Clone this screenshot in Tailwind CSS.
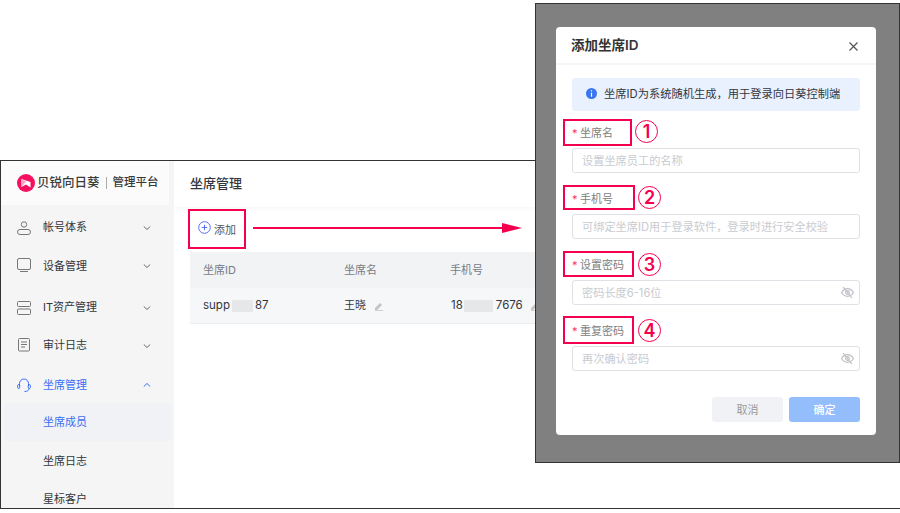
<!DOCTYPE html>
<html lang="zh">
<head>
<meta charset="UTF-8">
<script src="https://cdn.jsdelivr.net/npm/@tailwindcss/browser@4"></script>
<title>添加坐席ID</title>
</head>
<body class="bg-white">
<div class="relative w-[900px] h-[513px] overflow-hidden bg-white font-['Inter','Noto_Sans_CJK_SC',sans-serif] text-[11px] text-[#33363d]">

  <!-- app window -->
  <div class="absolute left-0 top-[160px] w-[902px] h-[349px] border border-[#333] flex">
    <aside class="w-[173px] shrink-0 h-full bg-[#f5f5f6] flex flex-col overflow-hidden">
      <div class="h-[44px] shrink-0 bg-white/60 flex items-center pl-[16px] mr-[5px] text-[#3a3a3a] font-medium">
        <svg class="w-[18px] h-[18px] mr-[2px] shrink-0" viewBox="0 0 18 18"><circle cx="9" cy="9" r="9" fill="#f5115f"/><path d="M4.500 5l9 3v5.500L9 10.500 4.500 13z" fill="#fff"/><path d="M9 7.500L4.500 5v8z" fill="#f9a3c0"/></svg>
        <span class="text-[12.5px]">贝锐向日葵</span><span class="w-px h-[12px] bg-[#aaa] mx-[6px]"></span><span class="text-[11.5px]">管理平台</span>
      </div>
      <nav class="flex flex-col shrink-0">
        <div class="h-[39px] mt-[3px] flex items-center pl-[16px] pr-[23px]">
          <svg class="w-[14px] h-[14px] mr-[12px]" viewBox="0 0 14 14" fill="none" stroke="#777" stroke-width="1"><circle cx="7" cy="3.500" r="2.700"/><rect x=".5" y="8.500" width="13" height="5" rx="2.500"/></svg>
          <span class="flex-1">帐号体系</span>
          <svg class="w-[8px] h-[6px]" viewBox="0 0 8 6" fill="none" stroke="#666"><path d="M.8 1.500L4 4.500l3.200-3"/></svg>
        </div>
        <div class="h-[38px] flex items-center pl-[16px] pr-[23px]">
          <svg class="w-[14px] h-[14px] mr-[12px] -translate-y-[1px]" viewBox="0 0 14 14" fill="none" stroke="#777" stroke-width="1"><rect x=".5" y=".5" width="13" height="11" rx="1.500"/><path d="M3 13.500h8"/></svg>
          <span class="flex-1">设备管理</span>
          <svg class="w-[8px] h-[6px]" viewBox="0 0 8 6" fill="none" stroke="#666"><path d="M.8 1.500L4 4.500l3.200-3"/></svg>
        </div>
        <div class="h-[45px] flex items-center pl-[16px] pr-[23px]">
          <svg class="w-[14px] h-[14px] mr-[12px]" viewBox="0 0 14 14" fill="none" stroke="#777" stroke-width="1"><rect x=".5" y=".5" width="13" height="5" rx="1"/><rect x=".5" y="8" width="13" height="5.500" rx="1"/></svg>
          <span class="flex-1">IT资产管理</span>
          <svg class="w-[8px] h-[6px]" viewBox="0 0 8 6" fill="none" stroke="#666"><path d="M.8 1.500L4 4.500l3.200-3"/></svg>
        </div>
        <div class="h-[31px] flex items-center pl-[17px] pr-[23px]">
          <svg class="w-[13px] h-[14px] mr-[12px] -translate-y-[1px]" viewBox="0 0 13 14" fill="none" stroke="#777" stroke-width="1"><rect x=".5" y=".5" width="11" height="12.500" rx="1"/><path d="M3 4h6M3 6.500h6M3 9h4"/></svg>
          <span class="flex-1">审计日志</span>
          <svg class="w-[8px] h-[6px]" viewBox="0 0 8 6" fill="none" stroke="#666"><path d="M.8 1.500L4 4.500l3.200-3"/></svg>
        </div>
        <div class="h-[42px] pt-[6px] flex items-center pl-[16px] pr-[23px] text-[#3a6ff5]">
          <svg class="w-[14px] h-[14px] mr-[12px]" viewBox="0 0 14 14" fill="none" stroke="#3a6ff5" stroke-width="1"><path d="M2.500 8V5.500a4.500 4.500 0 0 1 9 0V8"/><rect x=".7" y="6.500" width="2" height="4" rx="1"/><rect x="11.300" y="6.500" width="2" height="4" rx="1"/><path d="M12 10.500c0 2-2 3-4.500 3"/></svg>
          <span class="flex-1">坐席管理</span>
          <svg class="w-[8px] h-[6px]" viewBox="0 0 8 6" fill="none" stroke="#3a6ff5"><path d="M.8 4.500L4 1.500l3.200 3"/></svg>
        </div>
        <div class="h-[38px] mx-[3px] pl-[39px] flex items-center rounded-[4px] bg-[#f1f2f5] text-[#3a6ff5]">坐席成员</div>
        <div class="h-[40px] pl-[42px] flex items-center">坐席日志</div>
        <div class="h-[36px] pl-[42px] flex items-center">星标客户</div>
      </nav>
    </aside>
    <main class="flex-1 bg-white overflow-hidden">
      <div class="h-[46px] flex items-center pl-[16px] text-[13px] font-medium shadow-[0_2px_4px_rgba(0,0,0,0.03)]">坐席管理</div>
      <div class="h-[45px] pl-[24px] flex items-center text-[#555]">
        <svg class="w-[13px] h-[13px] mr-[3px] -translate-y-[2px]" viewBox="0 0 13 13" fill="none" stroke="#5a6ff0" stroke-width="1"><circle cx="6.500" cy="6.500" r="5.800"/><path d="M6.500 3.800v5.400M3.800 6.500h5.400"/></svg>
        <span class="pt-[1px]">添加</span>
      </div>
      <div class="ml-[16px] text-[11.5px] text-[#33363d]">
        <div class="h-[36px] flex items-center bg-[#f2f3f5] text-[#777c85] text-[11px]">
          <span class="w-[154px] pl-[13px]">坐席ID</span><span class="w-[106px]">坐席名</span><span>手机号</span>
        </div>
        <div class="h-[36px] flex items-center bg-[#f6f7f9] border-b border-[#eceef2]">
          <span class="w-[154px] pl-[13px] flex items-center">supp<span class="w-[21px] h-[12px] ml-[2px] mr-[2px] bg-[#e6e7e9]"></span>87</span>
          <span class="w-[106px] flex items-center text-[11px]">王晓
            <svg class="w-[10px] h-[10px] ml-[8px]" viewBox="0 0 10 10" fill="#c4c4c4"><path d="M1 7l5-5 2 2-5 5H1zM1 9.300h8v.7H1z"/></svg>
          </span>
          <span class="flex items-center pl-[1px]">18<span class="w-[29px] h-[12px] ml-[1px] mr-[3px] bg-[#e6e7e9]"></span>7676
            <svg class="w-[10px] h-[10px] ml-[7px]" viewBox="0 0 10 10" fill="#c4c4c4"><path d="M1 7l5-5 2 2-5 5H1zM1 9.300h8v.7H1z"/></svg>
          </span>
        </div>
      </div>
    </main>
  </div>

  <!-- highlight on the add button, and the arrow -->
  <div class="absolute left-[188px] top-[209px] w-[58px] h-[40px] border-[2px] border-[#f5004f]"></div>
  <svg class="absolute left-[252px] top-[220px] w-[272px] h-[16px]" viewBox="0 0 272 16"><path d="M1 8h250" stroke="#f5004f" stroke-width="2"/><path d="M250 3l20 5-20 5z" fill="#f5004f"/></svg>

  <!-- dialog screenshot -->
  <div class="absolute left-[535px] top-[3px] w-[365px] h-[460px] bg-[#808080] border border-[#333]">
    <div class="absolute left-[20px] top-[23px] w-[320px] h-[408px] bg-white rounded-[4px] flex flex-col">
      <div class="h-[38px] shrink-0 flex items-center justify-between pl-[15px] pr-[18px] border-b-2 border-[#f5f5f6]">
        <span class="text-[13.5px] font-semibold text-[#333]">添加坐席ID</span>
        <svg class="w-[9px] h-[9px] translate-y-[1px]" viewBox="0 0 9 9" stroke="#555" stroke-width="1.200"><path d="M.5.5l8 8M8.500.5l-8 8"/></svg>
      </div>
      <div class="mt-[13px] mx-[16px] h-[33px] rounded-[3px] bg-[#e8f1fd] flex items-center pl-[14px] text-[11.25px] shrink-0">
        <svg class="w-[11px] h-[11px] mr-[7px] -translate-y-[1px]" viewBox="0 0 11 11"><circle cx="5.500" cy="5.500" r="5.500" fill="#3a76f0"/><path d="M5.500 2.300v1.200M5.500 4.700v4" stroke="#fff" stroke-width="1.200"/></svg>
        坐席ID为系统随机生成，用于登录向日葵控制端
      </div>
      <form class="mx-[16px] flex flex-col text-[#808080]">
        <label class="h-[22px] mt-[10px] pt-[2px] flex items-center"><span class="text-[#f5356f] w-[8px]">*</span>坐席名</label>
        <div class="h-[25px] mt-[5px] pt-[2px] border border-[#dfe1e6] rounded-[3px] flex items-center px-[9px] text-[11.2px] text-[#c9cbd0]">设置坐席员工的名称</div>
        <label class="h-[22px] mt-[14px] pt-[2px] flex items-center"><span class="text-[#f5356f] w-[8px]">*</span>手机号</label>
        <div class="h-[25px] mt-[5px] pt-[2px] border border-[#dfe1e6] rounded-[3px] flex items-center px-[9px] text-[11.2px] text-[#c9cbd0]">可绑定坐席ID用于登录软件，登录时进行安全校验</div>
        <label class="h-[22px] mt-[14px] pt-[2px] flex items-center"><span class="text-[#f5356f] w-[8px]">*</span>设置密码</label>
        <div class="h-[25px] mt-[5px] border border-[#dfe1e6] rounded-[3px] flex items-center justify-between pl-[9px] pr-[5px] text-[11.2px] text-[#c9cbd0]"><span class="pt-[2px]">密码长度6-16位</span>
          <svg class="w-[13px] h-[13px]" viewBox="0 0 12 12" fill="none" stroke="#bfc1c6" stroke-width="1.100"><path d="M.5 6C2 3.500 4 2.500 6 2.500S10 3.500 11.500 6C10 8.500 8 9.500 6 9.500S2 8.500 .5 6z"/><circle cx="6" cy="6" r="1.700"/><path d="M2 1l8 10"/></svg>
        </div>
        <label class="h-[22px] mt-[14px] pt-[2px] flex items-center"><span class="text-[#f5356f] w-[8px]">*</span>重复密码</label>
        <div class="h-[25px] mt-[5px] border border-[#dfe1e6] rounded-[3px] flex items-center justify-between pl-[9px] pr-[5px] text-[11.2px] text-[#c9cbd0]"><span class="pt-[2px]">再次确认密码</span>
          <svg class="w-[13px] h-[13px]" viewBox="0 0 12 12" fill="none" stroke="#bfc1c6" stroke-width="1.100"><path d="M.5 6C2 3.500 4 2.500 6 2.500S10 3.500 11.500 6C10 8.500 8 9.500 6 9.500S2 8.500 .5 6z"/><circle cx="6" cy="6" r="1.700"/><path d="M2 1l8 10"/></svg>
        </div>
        <div class="flex justify-end gap-[6px] mt-[26px]">
          <div class="w-[71px] h-[25px] pt-[2px] rounded-[3px] bg-[#f1f2f5] text-[#999] flex items-center justify-center">取消</div>
          <div class="w-[71px] h-[25px] pt-[2px] rounded-[3px] bg-[#94bdfc] text-white font-medium flex items-center justify-center">确定</div>
        </div>
      </form>
    </div>
  </div>

  <!-- callouts on the dialog -->
  <div class="absolute left-[563px] top-[119px] w-[69px] h-[27px] border-[2px] border-[#f5004f]"></div>
  <div class="absolute left-[563px] top-[185px] w-[72px] h-[25px] border-[2px] border-[#f5004f]"></div>
  <div class="absolute left-[563px] top-[251px] w-[71px] h-[26px] border-[2px] border-[#f5004f]"></div>
  <div class="absolute left-[563px] top-[316px] w-[71px] h-[28px] border-[2px] border-[#f5004f]"></div>
  <div class="absolute left-[635px] top-[120px] w-[23px] h-[23px] rounded-full border border-[#f5004f] text-[#f5004f] text-[18px] font-semibold leading-none flex items-center justify-center">1</div>
  <div class="absolute left-[638px] top-[186px] w-[23px] h-[23px] rounded-full border border-[#f5004f] text-[#f5004f] text-[18px] font-semibold leading-none flex items-center justify-center">2</div>
  <div class="absolute left-[638px] top-[253px] w-[23px] h-[23px] rounded-full border border-[#f5004f] text-[#f5004f] text-[18px] font-semibold leading-none flex items-center justify-center">3</div>
  <div class="absolute left-[638px] top-[319px] w-[23px] h-[23px] rounded-full border border-[#f5004f] text-[#f5004f] text-[18px] font-semibold leading-none flex items-center justify-center">4</div>
</div>
</body>
</html>
